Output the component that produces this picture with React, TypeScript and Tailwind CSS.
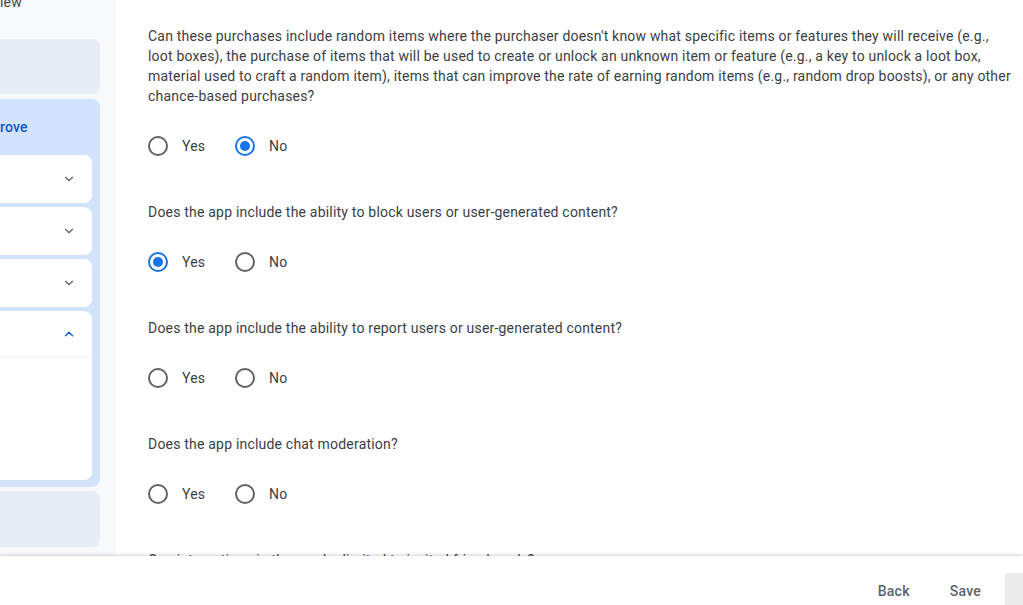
import { ChevronDown, ChevronUp } from "lucide-react";

type Question = {
  text: string;
  answer: "yes" | "no" | null;
  hidden?: boolean;
};

const questions: Question[] = [
  {
    text: "Can these purchases include random items where the purchaser doesn't know what specific items or features they will receive (e.g., loot boxes), the purchase of items that will be used to create or unlock an unknown item or feature (e.g., a key to unlock a loot box, material used to craft a random item), items that can improve the rate of earning random items (e.g., random drop boosts), or any other chance-based purchases?",
    answer: "no",
  },
  { text: "Does the app include the ability to block users or user-generated content?", answer: "yes" },
  { text: "Does the app include the ability to report users or user-generated content?", answer: null },
  { text: "Does the app include chat moderation?", answer: null },
  // last one sits under the footer, only its top edge peeks out
  { text: "Can interactions in the app be limited to invited friends only?", answer: null, hidden: true },
];

function Radio({ checked, label }: { checked: boolean; label: string }) {
  return (
    <div className="flex w-[87px] items-center gap-[14px]">
      <span
        className={
          checked
            ? "flex h-5 w-5 items-center justify-center rounded-full border-2 border-[#1a73e8]"
            : "flex h-5 w-5 items-center justify-center rounded-full border-2 border-[#5f6368]"
        }
      >
        {checked && <span className="h-[10px] w-[10px] rounded-full bg-[#1a73e8]" />}
      </span>
      <span className="text-sm leading-5 tracking-[0.2px] text-[#3c4043]">{label}</span>
    </div>
  );
}

function SideCard({ open }: { open?: boolean }) {
  if (open) {
    return (
      <div className="h-[169px] rounded-r-[8px] bg-white">
        <div className="flex h-[46px] items-center justify-end border-b border-[#f1f3f4] pr-[16px]">
          <ChevronUp size={14} strokeWidth={2.25} className="text-[#0b57d0]" />
        </div>
      </div>
    );
  }
  return (
    <div className="flex h-[48px] items-center justify-end rounded-r-[8px] bg-white pr-[16px]">
      <ChevronDown size={14} strokeWidth={2} className="text-[#5f6368]" />
    </div>
  );
}

export default function App() {
  return (
    <div
      className="relative flex h-[605px] w-full overflow-hidden bg-white"
      style={{ fontFamily: "Roboto, 'Liberation Sans', sans-serif" }}
    >
      <aside className="flex h-full w-[116px] shrink-0 flex-col bg-[#f8f9fd] pr-[16px]">
        <div className="-mt-[8px] h-[47px] text-sm leading-5 tracking-[0.2px] text-[#444746]">iew</div>
        <div className="h-[55px] rounded-r-[8px] bg-[#e8ecf4]" />
        <div className="mt-[5px] flex h-[388px] flex-col rounded-r-[8px] bg-[#d3e3fd] pr-[8px]">
          <div className="h-[56px] pt-[18px] text-sm font-medium leading-5 tracking-[0.2px] text-[#0b57d0]">rove</div>
          <div className="flex flex-col gap-[4px]">
            <SideCard />
            <SideCard />
            <SideCard />
            <SideCard open />
          </div>
        </div>
        <div className="mt-[4px] h-[56px] rounded-r-[8px] bg-[#e8ecf4]" />
      </aside>

      <main className="flex-1 pl-[32px] pt-[26px]">
        <div className="flex w-[868px] flex-col">
          {questions.map((q, i) => (
            <div key={i} className={i === 0 ? "" : "mt-[46px]"}>
              <p className="text-sm leading-5 tracking-[0.2px] text-[#3c4043]">{q.text}</p>
              {!q.hidden && (
                <div className="mt-[30px] flex h-5 items-center">
                  <Radio checked={q.answer === "yes"} label="Yes" />
                  <Radio checked={q.answer === "no"} label="No" />
                </div>
              )}
            </div>
          ))}
        </div>
      </main>

      <footer className="absolute bottom-0 left-0 right-0 flex h-[49px] items-start justify-end gap-[8px] overflow-hidden bg-white pt-[17px] shadow-[0_-1px_3px_rgba(0,0,0,0.18)]">
        <button className="h-9 px-[16px] text-sm font-medium tracking-[0.25px] text-[#5f6368]">Back</button>
        <button className="h-9 px-[16px] text-sm font-medium tracking-[0.25px] text-[#5f6368]">Save</button>
        <div className="-mr-[62px] h-9 w-[80px] rounded-[4px] bg-[#ececec]" />
      </footer>
    </div>
  );
}
